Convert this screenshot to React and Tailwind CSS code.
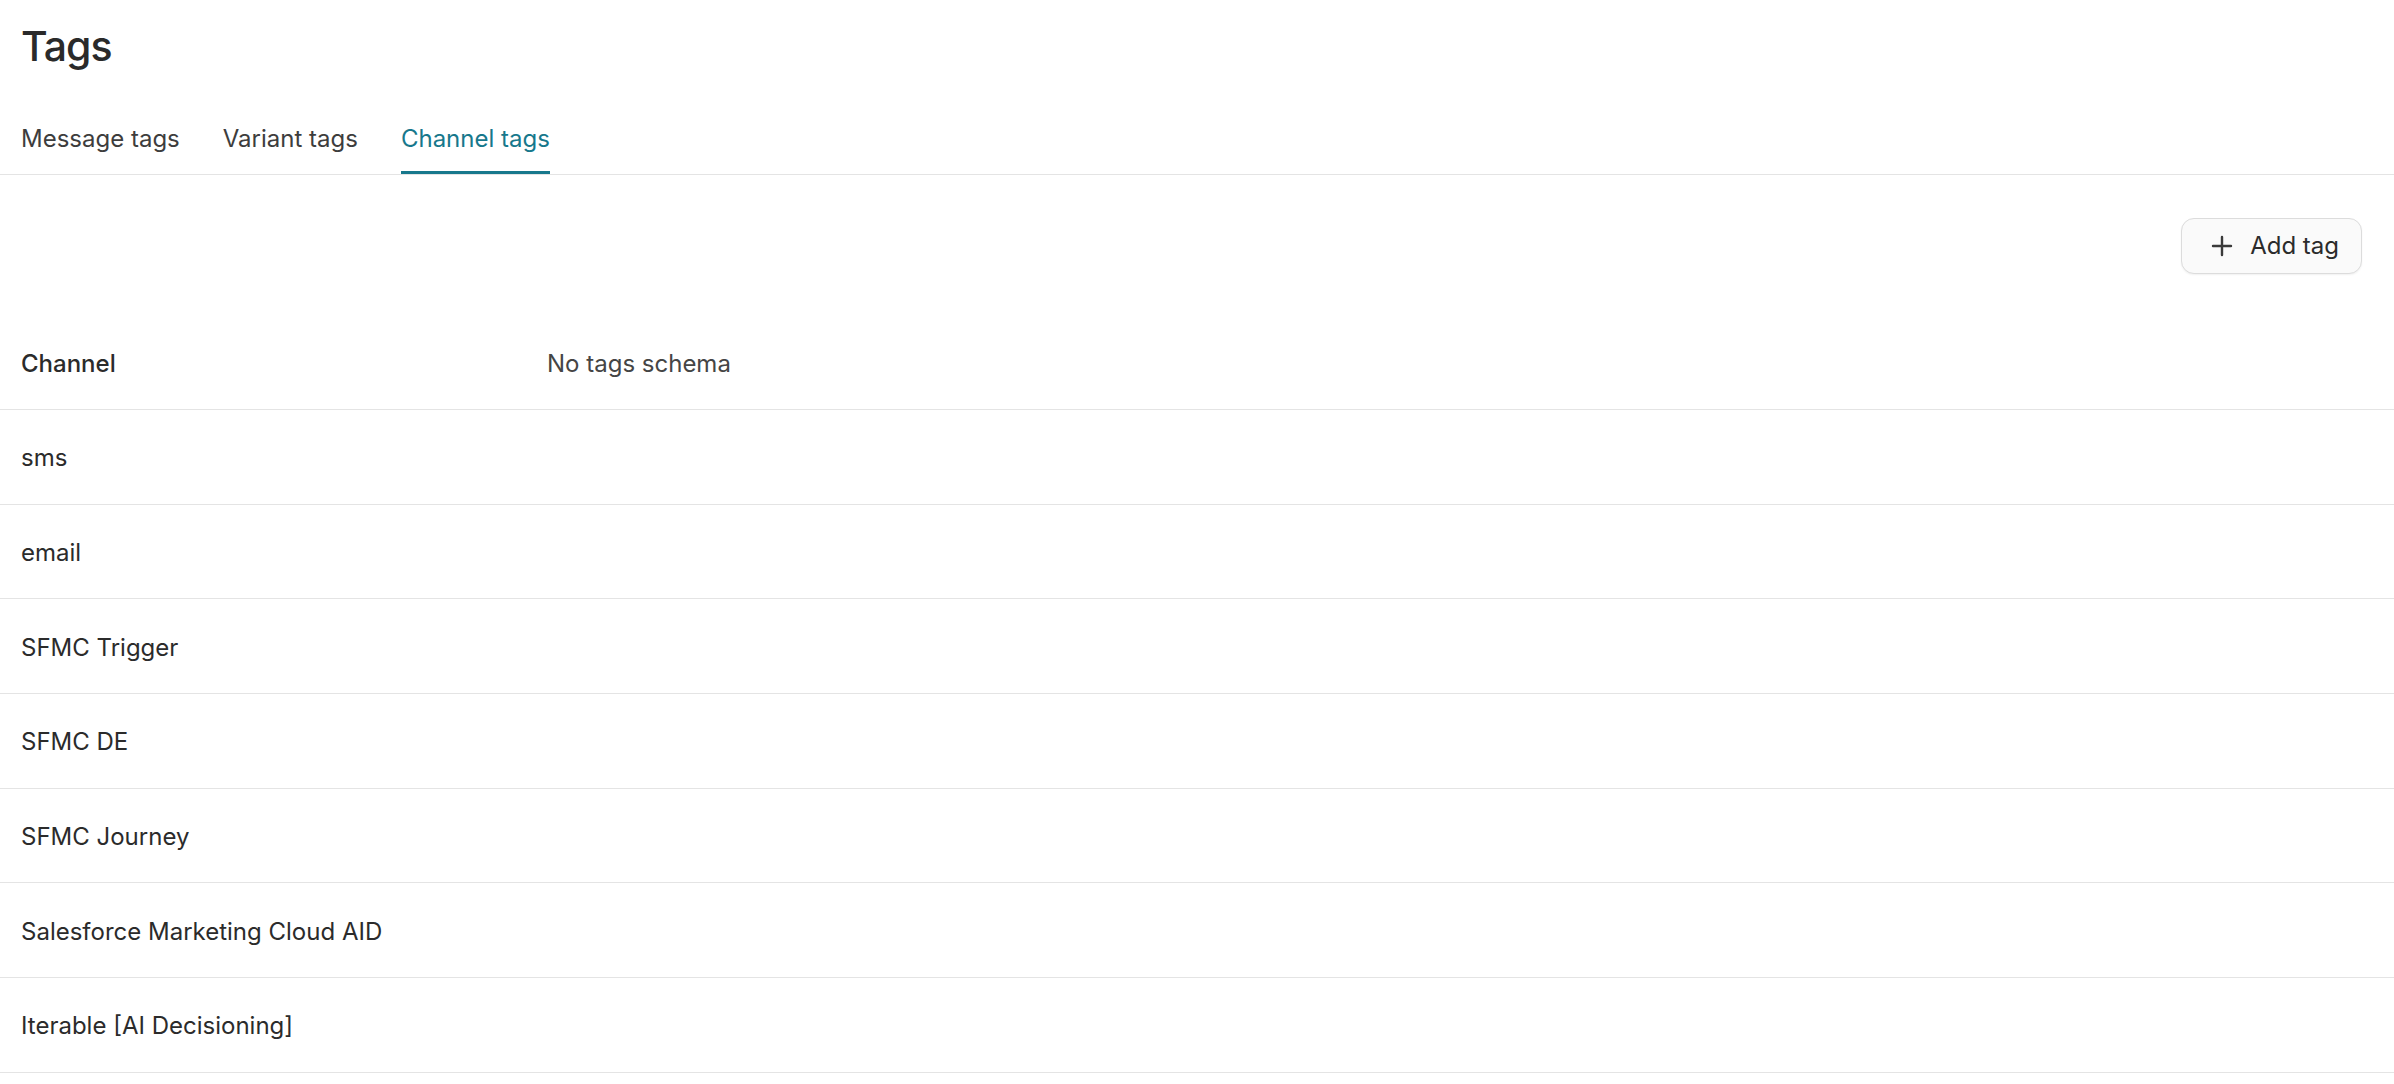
import React from "react";

const rows = [
  "sms",
  "email",
  "SFMC Trigger",
  "SFMC DE",
  "SFMC Journey",
  "Salesforce Marketing Cloud AID",
  "Iterable [AI Decisioning]",
];

export default function App() {
  return (
    <div
      className="min-h-screen bg-white text-[#2b2b2b]"
      style={{ fontFamily: "Inter, 'Noto Sans', sans-serif" }}
    >
      <div className="px-[21px] pt-[21px]">
        <h1 className="text-[41px] leading-[50px] font-medium tracking-[-1px] text-[#2a2a2a]">
          Tags
        </h1>
      </div>
      <div className="mt-[53px] flex gap-[43px] border-b border-[#e4e4e4] px-[21px]">
        <button className="pb-[20px] text-[24px] leading-[30px] text-[#3d3d3d]">
          Message tags
        </button>
        <button className="pb-[20px] text-[24px] leading-[30px] text-[#3d3d3d]">
          Variant tags
        </button>
        <button className="relative pb-[20px] text-[24px] leading-[30px] text-[#17788c]">
          Channel tags
          <span className="absolute bottom-0 left-0 right-0 h-[3px] bg-[#17788c]" />
        </button>
      </div>
      <div className="flex justify-end pr-[32px] pt-[43px]">
        <button className="flex h-[56px] items-center gap-[17px] rounded-[13px] border border-[#dcdcdc] bg-[#fafafa] pl-[29px] pr-[22px] text-[24px] text-[#2b2b2b] shadow-[0_1px_2px_rgba(0,0,0,0.06)]">
          <svg width="22" height="22" viewBox="0 0 22 22" fill="none">
            <path d="M11 2v18M2 11h18" stroke="#3a3a3a" strokeWidth="2.4" strokeLinecap="round" />
          </svg>
          Add tag
        </button>
      </div>
      <div className="mt-[41px]">
        <div className="grid h-[95px] grid-cols-[526px_1fr] items-center border-b border-[#e4e4e4] pl-[21px] pt-[4px]">
          <div className="text-[24px] font-medium text-[#2b2b2b]">Channel</div>
          <div className="text-[24px] text-[#454545]">No tags schema</div>
        </div>
        {rows.map((r) => (
          <div
            key={r}
            className="grid h-[94.7px] grid-cols-[526px_1fr] items-center border-b border-[#e4e4e4] pl-[21px] pt-[3px]"
          >
            <div className="text-[24px] text-[#2b2b2b]">{r}</div>
            <div />
          </div>
        ))}
      </div>
    </div>
  );
}
